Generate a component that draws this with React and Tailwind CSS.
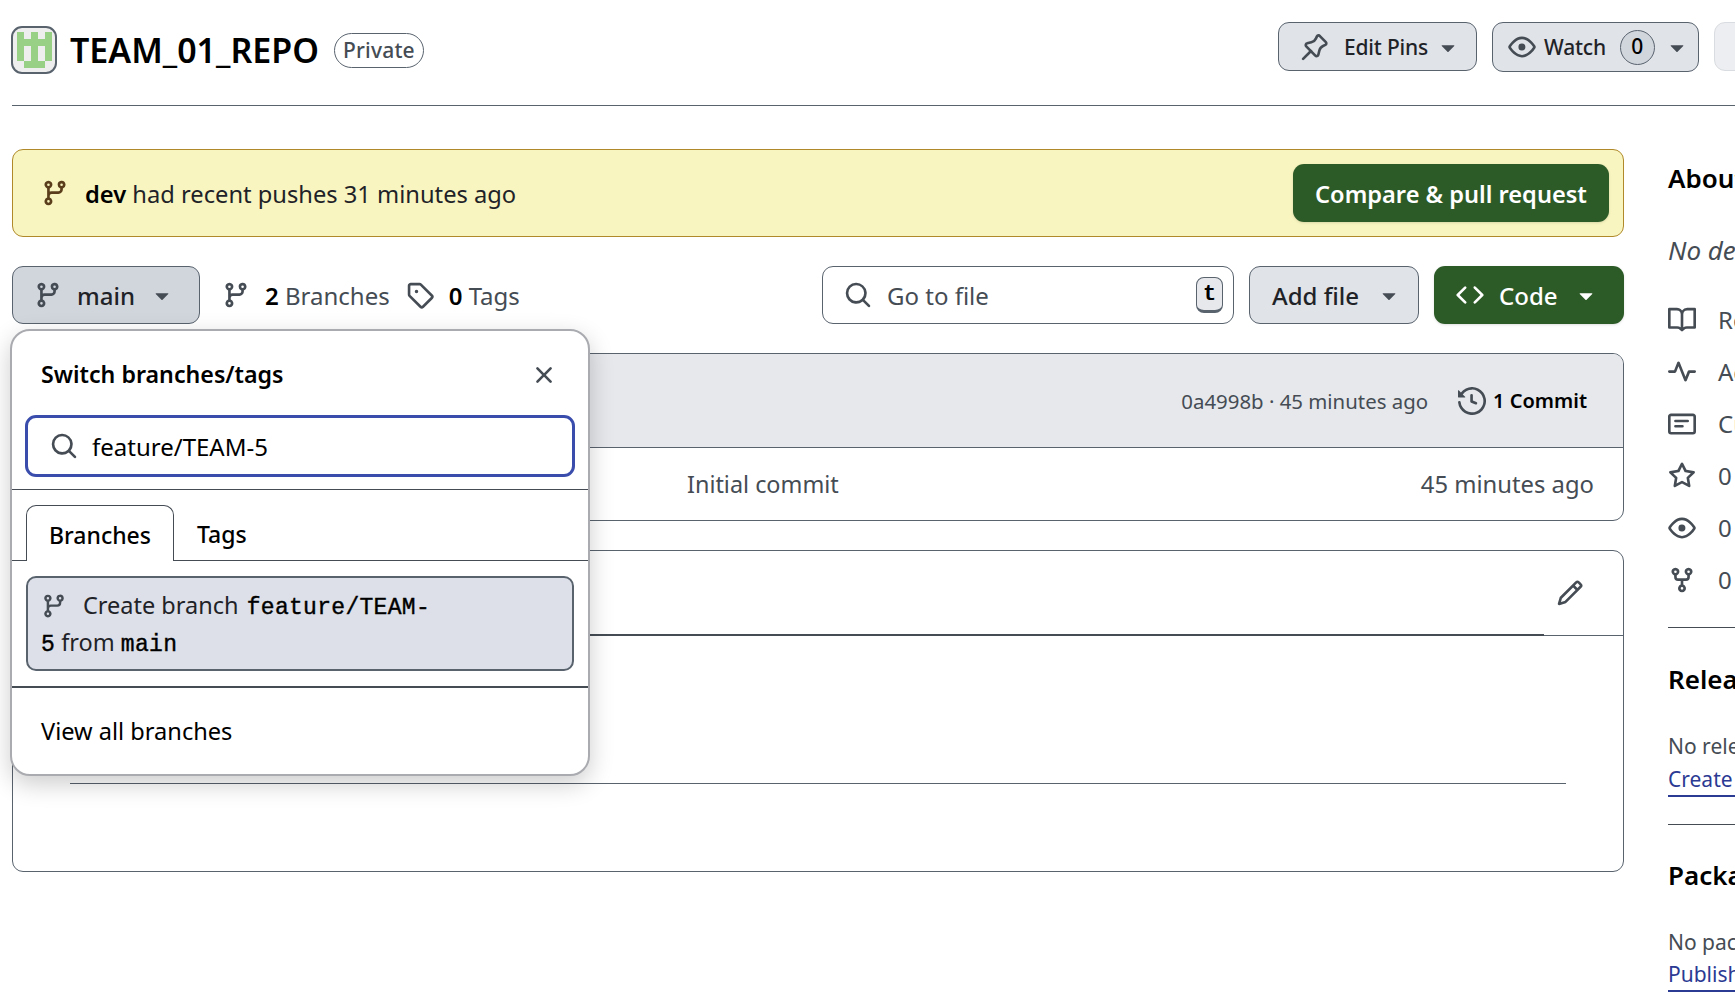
const P = {
  branch: "M9.5 3.25a2.25 2.25 0 1 1 3 2.122V6A2.5 2.5 0 0 1 10 8.5H6a1 1 0 0 0-1 1v1.128a2.251 2.251 0 1 1-1.5 0V5.372a2.25 2.25 0 1 1 1.5 0v1.836A2.493 2.493 0 0 1 6 7h4a1 1 0 0 0 1-1v-.628A2.25 2.25 0 0 1 9.5 3.25Zm-6 0a.75.75 0 1 0 1.5 0 .75.75 0 0 0-1.5 0Zm8.25-.75a.75.75 0 1 0 0 1.5.75.75 0 0 0 0-1.5ZM4.25 12a.75.75 0 1 0 0 1.5.75.75 0 0 0 0-1.5Z",
  tag: "M1 7.775V2.75C1 1.784 1.784 1 2.75 1h5.025c.464 0 .91.184 1.238.513l6.25 6.25a1.75 1.75 0 0 1 0 2.474l-5.026 5.026a1.75 1.75 0 0 1-2.474 0l-6.25-6.25A1.752 1.752 0 0 1 1 7.775Zm1.5 0c0 .066.026.13.073.177l6.25 6.25a.25.25 0 0 0 .354 0l5.025-5.025a.25.25 0 0 0 0-.354l-6.25-6.25a.25.25 0 0 0-.177-.073H2.75a.25.25 0 0 0-.25.25ZM6 5a1 1 0 1 1 0 2 1 1 0 0 1 0-2Z",
  search: "M10.68 11.74a6 6 0 0 1-7.922-8.982 6 6 0 0 1 8.982 7.922l3.04 3.04a.749.749 0 0 1-.326 1.275.749.749 0 0 1-.734-.215ZM11.5 7a4.499 4.499 0 1 0-8.997 0A4.499 4.499 0 0 0 11.5 7Z",
  x: "M3.72 3.72a.75.75 0 0 1 1.06 0L8 6.94l3.22-3.22a.749.749 0 0 1 1.275.326.749.749 0 0 1-.215.734L9.06 8l3.22 3.22a.749.749 0 0 1-.326 1.275.749.749 0 0 1-.734-.215L8 9.06l-3.22 3.22a.751.751 0 0 1-1.042-.018.751.751 0 0 1-.018-1.042L6.94 8 3.72 4.78a.75.75 0 0 1 0-1.06Z",
  eye: "M8 2c1.981 0 3.671.992 4.933 2.078 1.27 1.091 2.187 2.345 2.637 3.023a1.62 1.62 0 0 1 0 1.798c-.45.678-1.367 1.932-2.637 3.023C11.67 13.008 9.981 14 8 14c-1.981 0-3.671-.992-4.933-2.078C1.797 10.83.88 9.576.43 8.898a1.62 1.62 0 0 1 0-1.798c.45-.677 1.367-1.931 2.637-3.022C4.33 2.992 6.019 2 8 2ZM1.679 7.932a.12.12 0 0 0 0 .136c.411.622 1.241 1.75 2.366 2.717C5.176 11.758 6.527 12.5 8 12.5c1.473 0 2.825-.742 3.955-1.715 1.124-.967 1.954-2.096 2.366-2.717a.12.12 0 0 0 0-.136c-.412-.621-1.242-1.75-2.366-2.717C10.824 4.242 9.473 3.5 8 3.5c-1.473 0-2.825.742-3.955 1.715-1.124.967-1.954 2.096-2.366 2.717ZM8 10a2 2 0 1 1-.001-3.999A2 2 0 0 1 8 10Z",
  code: "m11.28 3.22 4.25 4.25a.75.75 0 0 1 0 1.06l-4.25 4.25a.749.749 0 0 1-1.275-.326.749.749 0 0 1 .215-.734L13.94 8l-3.72-3.72a.749.749 0 0 1 .326-1.275.749.749 0 0 1 .734.215Zm-6.56 0a.751.751 0 0 1 1.042.018.751.751 0 0 1 .018 1.042L2.06 8l3.72 3.72a.749.749 0 0 1-.326 1.275.749.749 0 0 1-.734-.215L.47 8.53a.75.75 0 0 1 0-1.06Z",
  history: "m.427 1.927 1.215 1.215a8.002 8.002 0 1 1-1.6 5.685.75.75 0 1 1 1.493-.154 6.5 6.5 0 1 0 1.18-4.458l1.358 1.358A.25.25 0 0 1 3.896 6H.25A.25.25 0 0 1 0 5.75V2.104a.25.25 0 0 1 .427-.177ZM7.75 4a.75.75 0 0 1 .75.75v2.992l2.028.812a.75.75 0 0 1-.557 1.392l-2.5-1A.751.751 0 0 1 7 8.25v-3.5A.75.75 0 0 1 7.75 4Z",
  book: "M0 1.75A.75.75 0 0 1 .75 1h4.253c1.227 0 2.317.59 3 1.501A3.743 3.743 0 0 1 11.006 1h4.245a.75.75 0 0 1 .75.75v10.5a.75.75 0 0 1-.75.75h-4.507a2.25 2.25 0 0 0-1.591.659l-.622.621a.75.75 0 0 1-1.06 0l-.622-.621A2.25 2.25 0 0 0 5.258 13H.75a.75.75 0 0 1-.75-.75Zm7.251 10.324.004-5.073-.002-2.253A2.25 2.25 0 0 0 5.003 2.5H1.5v9h3.757a3.75 3.75 0 0 1 1.994.574ZM8.755 4.75l-.004 7.322a3.752 3.752 0 0 1 1.992-.572H14.5v-9h-3.495a2.25 2.25 0 0 0-2.25 2.25Z",
  pulse: "M6 2c.306 0 .582.187.696.471L10 10.731l1.304-3.26A.751.751 0 0 1 12 7h3.25a.75.75 0 0 1 0 1.5h-2.742l-1.812 4.528a.751.751 0 0 1-1.392 0L6 4.77 4.696 8.03A.75.75 0 0 1 4 8.5H.75a.75.75 0 0 1 0-1.5h2.742l1.812-4.529A.751.751 0 0 1 6 2Z",
  note: "M0 3.75C0 2.784.784 2 1.75 2h12.5c.966 0 1.75.784 1.75 1.75v8.5A1.75 1.75 0 0 1 14.25 14H1.75A1.75 1.75 0 0 1 0 12.25Zm1.75-.25a.25.25 0 0 0-.25.25v8.5c0 .138.112.25.25.25h12.5a.25.25 0 0 0 .25-.25v-8.5a.25.25 0 0 0-.25-.25ZM3.5 6.25a.75.75 0 0 1 .75-.75h7a.75.75 0 0 1 0 1.5h-7a.75.75 0 0 1-.75-.75Zm.75 2.25h4a.75.75 0 0 1 0 1.5h-4a.75.75 0 0 1 0-1.5Z",
  star: "M8 .25a.75.75 0 0 1 .673.418l1.882 3.815 4.21.612a.75.75 0 0 1 .416 1.279l-3.046 2.97.719 4.192a.751.751 0 0 1-1.088.791L8 12.347l-3.766 1.98a.75.75 0 0 1-1.088-.79l.72-4.194L.818 6.374a.75.75 0 0 1 .416-1.28l4.21-.611L7.327.668A.75.75 0 0 1 8 .25Zm0 2.445L6.615 5.5a.75.75 0 0 1-.564.41l-3.097.45 2.24 2.184a.75.75 0 0 1 .216.664l-.528 3.084 2.769-1.456a.75.75 0 0 1 .698 0l2.77 1.456-.53-3.084a.75.75 0 0 1 .216-.664l2.24-2.183-3.096-.45a.75.75 0 0 1-.564-.41L8 2.694Z",
  fork: "M5 5.372v.878c0 .414.336.75.75.75h4.5a.75.75 0 0 0 .75-.75v-.878a2.25 2.25 0 1 1 1.5 0v.878a2.25 2.25 0 0 1-2.25 2.25h-1.5v2.128a2.251 2.251 0 1 1-1.5 0V8.5h-1.5A2.25 2.25 0 0 1 3.5 6.25v-.878a2.25 2.25 0 1 1 1.5 0ZM5 3.25a.75.75 0 1 0-1.5 0 .75.75 0 0 0 1.5 0Zm6.75.75a.75.75 0 1 0 0-1.5.75.75 0 0 0 0 1.5Zm-3 8.75a.75.75 0 1 0-1.5 0 .75.75 0 0 0 1.5 0Z",
  pencil: "M11.013 1.427a1.75 1.75 0 0 1 2.474 0l1.086 1.086a1.75 1.75 0 0 1 0 2.474l-8.61 8.61c-.21.21-.47.364-.756.445l-3.251.93a.75.75 0 0 1-.927-.928l.929-3.25c.081-.286.235-.547.445-.758l8.61-8.61Zm.176 4.823L9.75 4.81l-6.286 6.287a.253.253 0 0 0-.064.108l-.558 1.953 1.953-.558a.253.253 0 0 0 .108-.064Zm1.238-3.763a.25.25 0 0 0-.354 0L10.811 3.75l1.439 1.44 1.263-1.263a.25.25 0 0 0 0-.354Z",
  caret: "M4.427 7.427l3.396 3.396a.25.25 0 0 0 .354 0l3.396-3.396A.25.25 0 0 0 11.396 7H4.604a.25.25 0 0 0-.177.427Z",
};

function I({ n, c = "w-7 h-7 text-[#454c54]" }) {
  return (
    <svg viewBox="0 0 16 16" fill="currentColor" className={`shrink-0 ${c}`}>
      <path d={P[n]} />
    </svg>
  );
}

function Pin() {
  return (
    <svg viewBox="0 0 16 16" fill="none" stroke="currentColor" strokeWidth="1.5" strokeLinecap="round" strokeLinejoin="round" className="shrink-0 w-7 h-7 text-[#454c54]">
      <path d="M10.8 1.8 14.2 5.2a1 1 0 0 1-.3 1.6l-1.3.6a3.8 3.8 0 0 0-2.1 2.6l-.6 2.4a1 1 0 0 1-1.7.5L3 7.6a1 1 0 0 1 .5-1.7l2.4-.6a3.8 3.8 0 0 0 2.6-2.1l.6-1.3a1 1 0 0 1 1.7-.1Z" />
      <path d="M5.7 10.3 1.2 14.8" />
    </svg>
  );
}

function Avatar() {
  return (
    <div className="w-[46px] h-[48px] rounded-[11px] border-2 border-[#59636e] bg-[#eeeeee] overflow-hidden shrink-0">
      <svg viewBox="-0.5 -0.5 6 6" preserveAspectRatio="none" className="w-full h-full" shapeRendering="crispEdges">
        <path fill="#98d086" d="M0 0h1v1h1V0h1v1h1V0h1v4H4v1H1V4H0Z" />
        <path fill="#eeeeee" d="M1 2h1v2H1ZM3 2h1v2H3Z" />
      </svg>
    </div>
  );
}

function Sidebar() {
  const row = "flex items-center h-[52px] gap-[22px] text-[#454c54] text-[24px]";
  const ic = "w-7 h-7 text-[#454c54]";
  return (
    <aside className="ml-[44px] w-[400px] shrink-0">
      <h2 className="text-[26px] font-semibold text-black leading-[36px] mt-[11px]">About</h2>
      <p className="text-[26px] italic text-[#454c54] leading-[34px] mt-[37px] whitespace-nowrap">No description, website, or topics provided.</p>
      <div className="mt-[27px]">
        <div className={row}><I n="book" c={ic} /><span>Readme</span></div>
        <div className={row}><I n="pulse" c={ic} /><span>Activity</span></div>
        <div className={row}><I n="note" c={ic} /><span>Custom properties</span></div>
        <div className={row}><I n="star" c={ic} /><span>0 stars</span></div>
        <div className={row}><I n="eye" c={ic} /><span>0 watching</span></div>
        <div className={row}><I n="fork" c={ic} /><span>0 forks</span></div>
      </div>
      <div className="border-t border-[#454c54] mt-[21px]" />
      <h2 className="text-[26px] font-semibold text-black leading-[36px] mt-[33px]">Releases</h2>
      <p className="text-[21px] text-[#454c54] leading-[30px] mt-[34px]">No releases published</p>
      <a className="inline-block text-[21px] text-[#2b3a93] leading-[31px] border-b-2 border-[#2b3a93] mt-[3px]">Create a new release</a>
      <div className="border-t border-[#454c54] mt-[27px]" />
      <h2 className="text-[26px] font-semibold text-black leading-[36px] mt-[32px]">Packages</h2>
      <p className="text-[21px] text-[#454c54] leading-[30px] mt-[34px]">No packages published</p>
      <a className="inline-block text-[21px] text-[#2b3a93] leading-[31px] border-b-2 border-[#2b3a93] mt-[2px]">Publish your first package</a>
    </aside>
  );
}

function Popover() {
  const mono = "font-['Liberation_Mono',monospace] font-normal text-[23px] leading-none tracking-[0.3px] text-black [-webkit-text-stroke:0.4px_#000]";
  return (
    <div className="absolute left-[-2px] top-[63px] w-[580px] h-[447px] bg-white rounded-[20px] border-2 border-[#a9abb0] shadow-[0_8px_24px_rgba(0,0,0,0.2)] text-black z-10 flex flex-col">
      <div className="h-[84px] flex items-center justify-between pl-[29px] pr-[30px] pt-[3px] shrink-0">
        <span className="text-[23.2px] font-semibold">Switch branches/tags</span>
        <I n="x" c="w-7 h-7 text-[#454c54]" />
      </div>
      <div className="mx-[13px] h-[62px] shrink-0 rounded-[11px] border-[3px] border-[#3a4dad] flex items-center pl-[22px] gap-[14px]">
        <I n="search" c="w-7 h-7 text-[#454c54]" />
        <span className="text-[24px] pt-[1px]">feature/TEAM-5</span>
      </div>
      <div className="border-b border-[#454c54] h-[13px] shrink-0" />
      <div className="h-[71px] shrink-0 border-b border-[#454c54] flex items-end pl-[14px]">
        <div className="w-[148px] h-[56px] -mb-px bg-white border border-b-0 border-[#454c54] rounded-t-[10px] flex items-center justify-center text-[23px] font-medium pt-[3px]">Branches</div>
        <div className="h-[56px] flex items-center ml-[23px] text-[23px] font-medium pt-[4px]">Tags</div>
      </div>
      <div className="mx-[14px] mt-[15px] h-[95px] shrink-0 bg-[#dde0e8] border-2 border-[#59636e] rounded-[10px] pl-[13px] pr-[14px] pt-[9px] text-[23.5px] leading-[36.5px] text-[#1f2328]">
        <I n="branch" c="inline-block w-[26px] h-[26px] text-[#454c54] mr-[16px] align-[-5px]" />
        Create branch <span className={`${mono} ml-[2px]`}>feature/TEAM-</span><br />
        <span className={mono}>5</span> from <span className={mono}>main</span>
      </div>
      <div className="border-b-2 border-[#454c54] h-[17px] shrink-0" />
      <div className="flex-1 flex items-center pl-[29px] text-[23.6px] pt-[1px]">View all branches</div>
    </div>
  );
}

export default function App() {
  const btn = "rounded-[11px] border border-[#59636e] bg-[#e0e3e8] flex items-center text-[#1f2328] font-medium";
  return (
    <div className="w-[1735px] h-[997px] overflow-hidden bg-white text-black font-['Noto_Sans',sans-serif]">
      <header className="ml-[12px] h-[106px] border-b border-[#59636e] flex items-start pt-[22px] relative">
        <div className="flex items-center -ml-px mt-[3px]">
          <Avatar />
          <h1 className="ml-[13px] text-[34px] font-semibold leading-[50px] text-black">TEAM_01_REPO</h1>
          <span className="ml-[15px] h-[35px] w-[90px] rounded-full border border-[#59636e] flex items-center justify-center text-[21px] text-[#454c54] font-medium pt-[2px] tracking-[0.2px]">Private</span>
        </div>
        <div className="ml-auto flex gap-[15px] -mr-[39px]">
          <div className={`${btn} w-[199px] h-[49px] pl-[22px]`}>
            <Pin />
            <span className="ml-[15px] text-[21px] tracking-[-0.2px] pt-[2px]">Edit Pins</span>
            <I n="caret" c="w-7 h-7 text-[#454c54] ml-[6px]" />
          </div>
          <div className={`${btn} w-[207px] h-[50px] pl-[15px]`}>
            <I n="eye" c="w-7 h-7 text-[#454c54]" />
            <span className="ml-[8px] text-[21px] tracking-[-0.2px] pt-[2px]">Watch</span>
            <span className="ml-[14px] w-[35px] h-[35px] rounded-full border border-[#59636e] bg-[#d1d5dc] flex items-center justify-center text-[21px] text-black">0</span>
            <I n="caret" c="w-7 h-7 text-[#454c54] ml-[8px]" />
          </div>
          <div className="w-[60px] h-[49px] rounded-l-[11px] bg-[#eceef1] border border-[#d9dce0]" />
        </div>
      </header>

      <main className="pl-[12px] pt-[43px] flex items-start">
        <div className="w-[1612px] shrink-0">
          <div className="h-[88px] rounded-[11px] border border-[#b08a2a] bg-[#f8f5c0] flex items-center pl-[28px] pr-[14px]">
            <I n="branch" c="w-7 h-7 text-[#5a3e1b]" />
            <span className="ml-[16px] text-[23.7px] text-[#1f2328] pt-[3px]"><b className="font-semibold text-black">dev</b> had recent pushes 31 minutes ago</span>
            <div className="ml-auto w-[316px] h-[58px] rounded-[11px] bg-[#2d5b27] shadow-sm flex items-center justify-center text-white text-[23.6px] font-semibold pt-[3px]">Compare &amp; pull request</div>
          </div>

          <div className="relative mt-[29px] h-[58px] flex items-center text-[24px]">
            <div className="w-[188px] h-[58px] rounded-[11px] border border-[#59636e] bg-[#d1d5dc] flex items-center pl-[21px] text-[#1f2328] font-medium">
              <I n="branch" c="w-7 h-7 text-[#454c54]" />
              <span className="ml-[15px] pt-[2px]">main</span>
              <I n="caret" c="w-7 h-7 text-[#454c54] ml-[13px]" />
            </div>
            <I n="branch" c="w-7 h-7 text-[#454c54] ml-[22px]" />
            <span className="ml-[15px] text-[#454c54] pt-[2px]"><b className="font-semibold text-black">2</b> Branches</span>
            <I n="tag" c="w-7 h-7 text-[#454c54] ml-[16px]" />
            <span className="ml-[15px] text-[#454c54] pt-[2px]"><b className="font-semibold text-black">0</b> Tags</span>

            <div className="ml-auto w-[412px] h-[58px] rounded-[11px] border border-[#59636e] flex items-center pl-[21px] pr-[10px]">
              <I n="search" c="w-7 h-7 text-[#454c54]" />
              <span className="ml-[15px] text-[#454c54] pt-[2px]">Go to file</span>
              <kbd className="ml-auto w-[27px] h-[36px] rounded-[8px] border border-[#59636e] border-b-[3px] bg-[#e6e8ec] flex items-center justify-center font-['Liberation_Mono',monospace] font-bold text-[22px] text-black">t</kbd>
            </div>
            <div className={`${btn} ml-[15px] w-[170px] h-[58px] pl-[22px]`}>
              <span className="pt-[2px]">Add file</span>
              <I n="caret" c="w-7 h-7 text-[#454c54] ml-[16px]" />
            </div>
            <div className="ml-[15px] w-[190px] h-[58px] rounded-[11px] bg-[#2d5b27] shadow-sm flex items-center pl-[22px] text-white font-medium">
              <I n="code" c="w-7 h-7 text-white" />
              <span className="ml-[15px] pt-[2px]">Code</span>
              <I n="caret" c="w-7 h-7 text-white ml-[14px]" />
            </div>
            <Popover />
          </div>

          <div className="mt-[29px] h-[168px] rounded-[11px] border border-[#59636e] overflow-hidden">
            <div className="h-[94px] bg-[#e6e8ec] border-b border-[#59636e] flex items-center justify-end pr-[36px] text-[#454c54]">
              <span className="text-[20.4px] pt-[1px]">0a4998b · 45 minutes ago</span>
              <I n="history" c="w-7 h-7 text-[#454c54] ml-[30px]" />
              <span className="ml-[7px] text-[20px] font-semibold text-black">1 Commit</span>
            </div>
            <div className="h-[73px] flex items-center pl-[674px] pr-[29px] text-[#454c54]">
              <span className="text-[23.4px] pt-[1px]">Initial commit</span>
              <span className="ml-auto text-[23.8px]">45 minutes ago</span>
            </div>
          </div>

          <div className="mt-[29px] h-[322px] rounded-[11px] border border-[#59636e]">
            <div className="h-[85px] border-b border-[#59636e] flex items-stretch">
              <div className="w-[1531px] border-b-2 border-[#454c54] -mb-px" />
              <div className="flex-1 flex items-center justify-center -ml-[28px]">
                <I n="pencil" c="w-7 h-7 text-[#454c54]" />
              </div>
            </div>
            <div className="mx-[57px] mt-[147px] border-t border-[#59636e]" />
          </div>
        </div>
        <Sidebar />
      </main>
    </div>
  );
}
